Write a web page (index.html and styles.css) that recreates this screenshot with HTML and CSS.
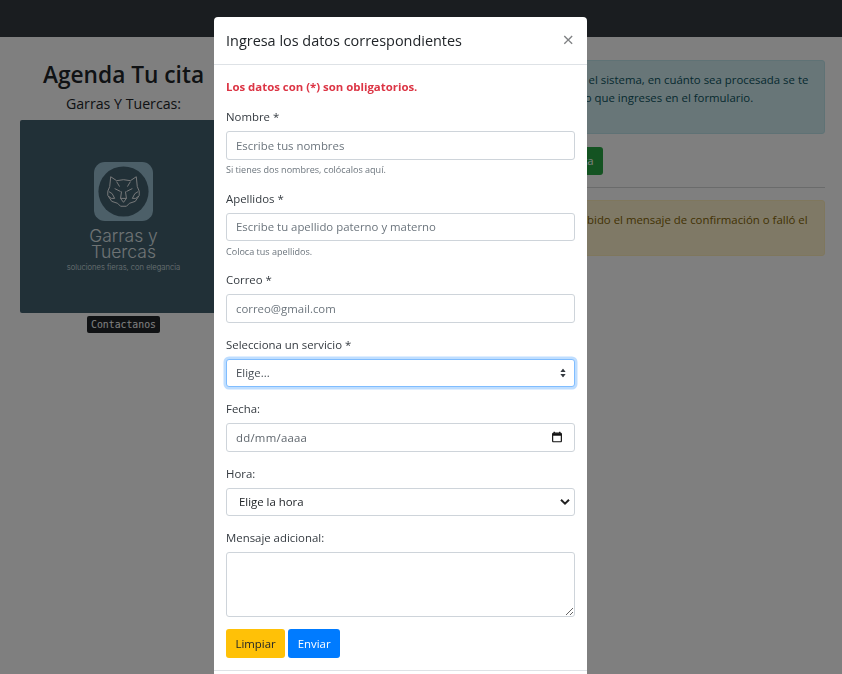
FILE: index.html
```html
<!DOCTYPE html>
<html lang="es">
<head>
  <meta charset="UTF-8">
  <title>Agenda Tu cita</title>
  <link rel="stylesheet" href="styles.css">
</head>
<body>

  <nav class="navbar"></nav>

  <main class="page">
    <section class="col-left">
      <h2>Agenda Tu cita</h2>
      <h3>Garras Y Tuercas:</h3>
      <div class="logo">
        <svg class="logo-icon" width="59" height="59" viewBox="0 0 60 60">
          <rect width="60" height="60" rx="11" fill="#98bed0"/>
          <circle cx="30" cy="30" r="25.5" fill="#42606f"/>
          <g fill="none" stroke="#f2f4f5" stroke-width="1" stroke-linejoin="round">
            <path d="M17 15l6 4q7-2 14 0l6-4 1 10q3 5 2 9l-4 6-6 2-3 3h-6l-3-3-6-2-4-6q-1-4 2-9z"/>
            <path d="M21 27l6 3M39 27l-6 3M27 37h6l-3 4zM28 30l-1 7M32 30l1 7"/>
            <path d="M15 30q4 1 6 7q-4 1-6-2M45 30q-4 1-6 7q4 1 6-2M23 20l3 5M37 20l-3 5"/>
          </g>
        </svg>
        <p class="logo-name">Garras y</p>
        <p class="logo-name">Tuercas</p>
        <p class="logo-tag">soluciones fieras, con elegancia</p>
      </div>
      <code class="contact">Contactanos</code>
    </section>

    <section class="col-right">
      <div class="alert alert-info">
        <span class="line">Tu solicitud quedará en el sistema, en cuánto sea procesada se te</span>
        <span class="line">enviará aviso al contacto que ingreses en el formulario.</span>
      </div>
      <button class="btn btn-green" type="button">Quisiera agendar una cita</button>
      <hr>
      <div class="alert alert-warning">
        <span class="line">Si tú todavía no has recibido el mensaje de confirmación o falló el</span>
        <span class="line">envío, contáctanos.</span>
      </div>
    </section>
  </main>

  <div class="backdrop"></div>

  <div class="modal">
    <header class="modal-header">
      <h5>Ingresa los datos correspondientes</h5>
      <span class="close">×</span>
    </header>
    <form class="modal-body">
      <p class="required">Los datos con (*) son obligatorios.</p>

      <div class="group">
        <label for="nombre">Nombre *</label>
        <input class="control" id="nombre" type="text" placeholder="Escribe tus nombres">
        <small>Si tienes dos nombres, colócalos aquí.</small>
      </div>

      <div class="group">
        <label for="apellidos">Apellidos *</label>
        <input class="control" id="apellidos" type="text" placeholder="Escribe tu apellido paterno y materno">
        <small>Coloca tus apellidos.</small>
      </div>

      <div class="group">
        <label for="correo">Correo *</label>
        <input class="control" id="correo" type="email" placeholder="correo@gmail.com">
      </div>

      <div class="group">
        <label for="servicio">Selecciona un servicio *</label>
        <div class="select-wrap">
          <select class="control control-focus" id="servicio">
            <option>Elige...</option>
          </select>
          <svg class="select-icon" width="6" height="9" viewBox="0 0 8 12">
            <path d="M4 0L7.5 4.8H.5zM4 12L.5 7.2h7z" fill="#343a40"/>
          </svg>
        </div>
      </div>

      <div class="group">
        <label for="fecha">Fecha:</label>
        <div class="select-wrap">
          <input class="control control-date" id="fecha" type="text" value="dd/mm/aaaa">
          <svg class="date-icon" width="10" height="11" viewBox="0 0 11 12">
            <path d="M2.5 0v1.5M8.5 0v1.5" stroke="#111" stroke-width="1.4" fill="none"/>
            <rect x=".7" y="1.7" width="9.6" height="9.6" rx="1" stroke="#111" stroke-width="1.3" fill="none"/>
            <rect x="1" y="2" width="9" height="2.6" fill="#111"/>
          </svg>
        </div>
      </div>

      <div class="group">
        <label for="hora">Hora:</label>
        <div class="select-wrap">
          <select class="control control-hour" id="hora">
            <option>Elige la hora</option>
          </select>
          <svg class="chevron-icon" width="10" height="7" viewBox="0 0 10 7">
            <path d="M1 1.2l4 4 4-4" stroke="#222" stroke-width="2" fill="none"/>
          </svg>
        </div>
      </div>

      <div class="group group-last">
        <label for="mensaje">Mensaje adicional:</label>
        <textarea class="control control-area" id="mensaje"></textarea>
      </div>

      <div class="actions">
        <button class="btn btn-yellow" type="reset">Limpiar</button>
        <button class="btn btn-blue" type="button">Enviar</button>
      </div>
    </form>
    <footer class="modal-footer"></footer>
  </div>

</body>
</html>
```

FILE: styles.css
```css
html, body {
  height: 100%;
}
body {
  margin: 0;
  overflow: hidden;
  font-family: "Open Sans", "Noto Sans", Arial, sans-serif;
  font-size: 11.4px;
  line-height: 18px;
  color: #212529;
  background-color: #fff;
}
.navbar {
  height: 37px;
  background-color: #343a40;
}
.page {
  display: flex;
  padding-top: 23px;
}
.col-left {
  width: 207px;
  margin-left: 20px;
  display: flex;
  flex-direction: column;
  align-items: center;
  flex-shrink: 0;
}
.col-left h2 {
  margin: -1px 0 0;
  font-size: 22.7px;
  line-height: 32px;
  font-weight: 600;
  white-space: nowrap;
}
.col-left h3 {
  margin: 3px 0 6px;
  font-size: 14.2px;
  line-height: 20px;
  font-weight: 400;
  white-space: nowrap;
}
.logo {
  width: 207px;
  height: 193px;
  padding-top: 42px;
  box-sizing: border-box;
  background-color: #42606f;
  border-radius: 2px;
  display: flex;
  flex-direction: column;
  align-items: center;
  color: #dfe6e9;
}
.logo-icon {
  flex-shrink: 0;
  margin-bottom: 7px;
}
.logo-name {
  margin: 0;
  font-family: "Inter", sans-serif;
  font-weight: 300;
  font-size: 17.5px;
  line-height: 16px;
  white-space: nowrap;
}
.logo-tag {
  margin: 3px 0 0;
  font-family: "Inter", sans-serif;
  font-weight: 300;
  font-size: 7.6px;
  line-height: 10px;
  white-space: nowrap;
}
.contact {
  margin-top: 3px;
  padding: 0 4px;
  font-family: "DejaVu Sans Mono", monospace;
  font-size: 9.8px;
  line-height: 17px;
  color: #fff;
  background-color: #212529;
  border-radius: 2px;
}
.col-right {
  flex: 1;
  margin-left: 221px;
  margin-right: 17px;
  min-width: 0;
}
.alert {
  padding: 10px 12px;
  border: 1px solid transparent;
  border-radius: 3px;
  box-sizing: border-box;
  overflow: hidden;
}
.line {
  display: block;
  white-space: nowrap;
}
.alert-info {
  height: 74px;
  color: #0c5460;
  background-color: #d1ecf1;
  border-color: #bee5eb;
}
.alert-warning {
  height: 56px;
  color: #856404;
  background-color: #fff3cd;
  border-color: #ffeeba;
}
hr {
  margin: 12px 0;
  border: 0;
  border-top: 1px solid #d5d6d7;
}
.btn {
  display: inline-block;
  height: 29px;
  padding: 0 8.5px;
  font-family: inherit;
  font-size: 11.4px;
  border: 1px solid transparent;
  border-radius: 3px;
  white-space: nowrap;
}
.col-right .btn {
  display: block;
  height: 27.5px;
  margin-top: 13px;
}
.btn-green {
  color: #fff;
  background-color: #28a745;
}
.btn-yellow {
  color: #212529;
  background-color: #ffc107;
}
.btn-blue {
  color: #fff;
  background-color: #007bff;
}
.backdrop {
  position: fixed;
  top: 0;
  left: 0;
  width: 100vw;
  height: 100vh;
  background-color: rgba(0,0,0,0.5);
}
.modal {
  position: fixed;
  top: 17px;
  left: 214px;
  width: 373px;
  height: 680px;
  background-color: #fff;
  border-radius: 4px;
}
.modal-header {
  display: flex;
  justify-content: space-between;
  align-items: center;
  height: 48px;
  padding: 0 13px 0 12px;
  box-sizing: border-box;
  border-bottom: 1px solid #dee2e6;
}
.modal-header h5 {
  margin: 0;
  font-size: 14.45px;
  line-height: 22px;
  font-weight: 400;
  color: #212529;
}
.close {
  font-size: 20px;
  font-weight: 400;
  color: #7f8183;
  margin-top: -2px;
}
.modal-body {
  padding: 13px 12px 0;
}
.required {
  margin: 0 0 12px;
  font-weight: 700;
  color: #dc3545;
}
.group {
  margin-bottom: 13px;
}
.group-last {
  margin-bottom: 12px;
}
label {
  display: block;
  margin-bottom: 5px;
  color: #343a40;
}
.control {
  display: block;
  width: 100%;
  height: 28.5px;
  padding: 4px 9px;
  box-sizing: border-box;
  font-family: inherit;
  font-size: 11.4px;
  line-height: 18px;
  color: #495057;
  background-color: #fff;
  border: 1px solid #ced4da;
  border-radius: 3px;
  outline: none;
  appearance: none;
}
.control::placeholder {
  color: #6c757d;
  opacity: 1;
}
.control-focus {
  border-color: #80bdff;
  box-shadow: 0 0 0 2.5px rgba(0,123,255,0.25);
}
.control-date {
  color: #5f666d;
  letter-spacing: 0.25px;
}
.control-hour {
  padding-left: 12px;
  color: #212529;
}
.control-area {
  height: 65px;
  resize: vertical;
}
.select-wrap {
  position: relative;
}
.select-icon, .date-icon, .chevron-icon {
  position: absolute;
  top: 50%;
  transform: translateY(-50%);
  pointer-events: none;
}
.select-icon {
  right: 9px;
}
.date-icon {
  right: 13px;
}
.chevron-icon {
  right: 5px;
}
small {
  display: block;
  margin-top: 3.5px;
  font-size: 9.05px;
  line-height: 13.5px;
  color: #6c757d;
}
.actions {
  display: flex;
  gap: 3px;
}
.modal-footer {
  margin-top: 12px;
  border-top: 1px solid #dee2e6;
}
```
